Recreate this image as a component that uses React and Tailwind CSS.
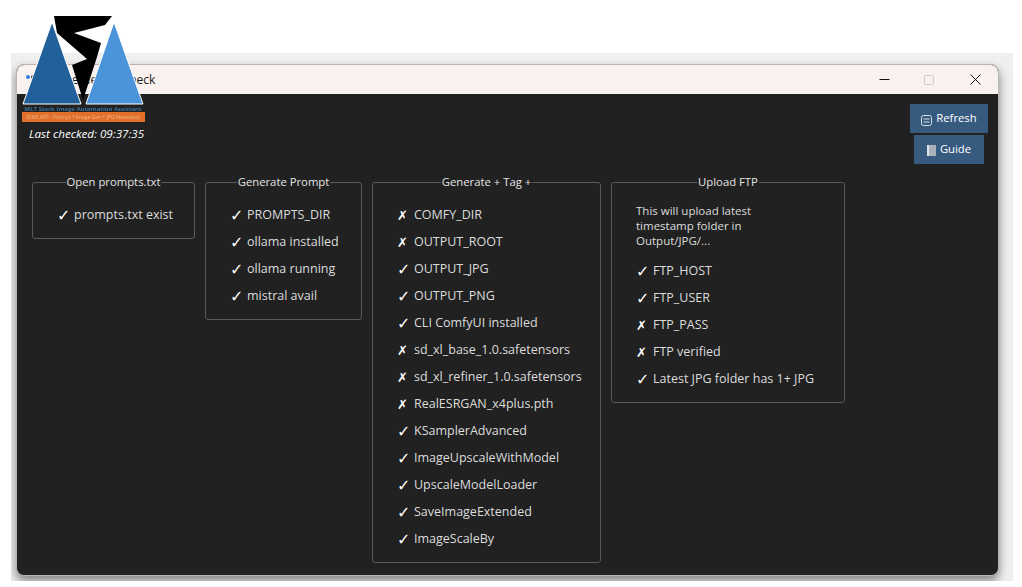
import { useState } from 'react';

const groups = [
    { title: 'Open prompts.txt', width: 'w-[163px]', rows: [[1, 'prompts.txt exist']] },
    {
        title: 'Generate Prompt',
        width: 'w-[157px]',
        rows: [[1, 'PROMPTS_DIR'], [1, 'ollama installed'], [1, 'ollama running'], [1, 'mistral avail']],
    },
    {
        title: 'Generate + Tag +',
        width: 'w-[229px]',
        rows: [
            [0, 'COMFY_DIR'],
            [0, 'OUTPUT_ROOT'],
            [1, 'OUTPUT_JPG'],
            [1, 'OUTPUT_PNG'],
            [1, 'CLI ComfyUI installed'],
            [0, 'sd_xl_base_1.0.safetensors'],
            [0, 'sd_xl_refiner_1.0.safetensors'],
            [0, 'RealESRGAN_x4plus.pth'],
            [1, 'KSamplerAdvanced'],
            [1, 'ImageUpscaleWithModel'],
            [1, 'UpscaleModelLoader'],
            [1, 'SaveImageExtended'],
            [1, 'ImageScaleBy'],
        ],
    },
    {
        title: 'Upload FTP',
        width: 'w-[234px]',
        note: ['This will upload latest', 'timestamp folder in', 'Output/JPG/...'],
        rows: [[1, 'FTP_HOST'], [1, 'FTP_USER'], [0, 'FTP_PASS'], [0, 'FTP verified'], [1, 'Latest JPG folder has 1+ JPG']],
    },
];

function Logo() {
    return (
        <svg className="absolute left-0 top-0 blur-[0.4px]" width="160" height="130" viewBox="0 0 160 130">
            <polygon points="54,16 112,16 105,25 74,33 101,43 97,57 83,100 72,65 87,59 57,33" fill="#000" />
            <polygon points="52,22 23,104 81,104" fill="#22609b" stroke="#fff" strokeWidth="1" />
            <polygon points="114,22 86,104 143,104" fill="#4c94da" stroke="#fff" strokeWidth="1" />
            <text x="83" y="110.5" textAnchor="middle" fontSize="6" fontWeight="700" fontFamily="'Open Sans', sans-serif" fill="#3f7299">
                MLT Stock Image Automation Assistant
            </text>
            <rect x="22" y="112" width="123" height="10" fill="#e2702a" />
            <text x="83" y="119" textAnchor="middle" fontSize="5" fontFamily="'Open Sans', sans-serif" fill="#f0b48c">
                (ONE APP - Prompt + Image Gen + JPG Metadata)
            </text>
        </svg>
    );
}

function Row({ ok, label }) {
    return (
        <div className="flex h-[27px] items-center">
            <span className={`w-[17px] shrink-0 text-white font-['DejaVu_Sans',sans-serif] ${ok ? 'text-[16px]' : 'text-[13px]'}`}>{ok ? '✓' : '✗'}</span>
            <span className="whitespace-nowrap">{label}</span>
        </div>
    );
}

function Group({ title, width, note, rows }) {
    return (
        <fieldset className={`${width} rounded-[3px] border border-[#5a5a5a]`}>
            <legend className="mx-auto h-[18px] px-[1px] text-[11.3px] leading-[18px] text-[#e4e4e4]">{title}</legend>
            <div className={`pb-[9px] pl-[24px] ${note ? 'pt-[12px]' : 'pt-[11px]'}`}>
                {note && (
                    <div className="mb-[10px] text-[11.5px] leading-[15px]">
                        {note.map((line) => (
                            <div key={line}>{line}</div>
                        ))}
                    </div>
                )}
                {rows.map(([ok, label]) => (
                    <Row key={label} ok={ok} label={label} />
                ))}
            </div>
        </fieldset>
    );
}

export default function App() {
    const [checkedAt] = useState('09:37:35');

    return (
        <div className="relative h-[587px] w-[1022px] overflow-hidden bg-white font-['Open_Sans',sans-serif]">
            <div className="ml-[11px] mt-[53px] h-[528px] w-[1002px] overflow-hidden bg-[#efefef] pl-[5px] pt-[11px]">
                <div className="flex h-[512px] w-[983px] flex-col overflow-hidden rounded-lg border border-[#b5b5b5] bg-[#212121] shadow-[0_5px_10px_rgba(0,0,0,0.45)]">
                    <div className="flex h-[29px] shrink-0 items-center bg-[#f8f1ed] pl-[9px] text-[12px] text-[#1a1a1a]">
                        <svg className="shrink-0" width="10" height="10" viewBox="0 0 10 10">
                            <circle cx="2" cy="2" r="2" fill="#2a7fe0" />
                            <circle cx="7" cy="2" r="2" fill="#333" />
                        </svg>
                        <span className="-ml-[2px] flex-1">Pipeline Health Check</span>
                        <svg className="mr-[2px]" width="138" height="14" viewBox="0 0 138 14" fill="none" strokeWidth="1">
                            <path d="M21.5 6.5h10" stroke="#111" />
                            <rect x="66.5" y="2.5" width="9" height="9" rx="1" stroke="#cfcccb" />
                            <path d="M112.5 1.5l10 10M122.5 1.5l-10 10" stroke="#111" />
                        </svg>
                    </div>

                    <div className="flex h-[79px] shrink-0 justify-between">
                        <div className="pl-[12px] pt-[31px] text-[11.6px] italic text-white">Last checked: {checkedAt}</div>
                        <div className="mr-[10px] flex w-[78px] flex-col items-center gap-[2px] pt-[10px]">
                            <button className="flex h-[29px] w-[78px] items-center justify-center gap-[4px] bg-[#375a7f] text-[11.3px] text-white">
                                <svg width="11" height="11" viewBox="0 0 11 11" fill="none" stroke="#d8dde8" className="mt-[3px]">
                                    <rect x="0.5" y="0.5" width="10" height="10" rx="2" />
                                    <path d="M2.5 4h6M2.5 7h6" />
                                </svg>
                                Refresh
                            </button>
                            <button className="flex h-[29px] w-[70px] items-center justify-center gap-[4px] bg-[#375a7f] text-[11.3px] text-white">
                                <svg width="9" height="11" viewBox="0 0 9 11" className="mt-[2px]">
                                    <rect width="9" height="11" fill="#a9b2bb" />
                                    <rect width="2" height="11" fill="#dfe4ea" />
                                </svg>
                                Guide
                            </button>
                        </div>
                    </div>

                    <div className="flex items-start gap-[10px] pl-[15px] text-[12.5px] text-[#dcdcdc]">
                        {groups.map((group) => (
                            <Group key={group.title} {...group} />
                        ))}
                    </div>
                </div>
            </div>
            <Logo />
        </div>
    );
}
